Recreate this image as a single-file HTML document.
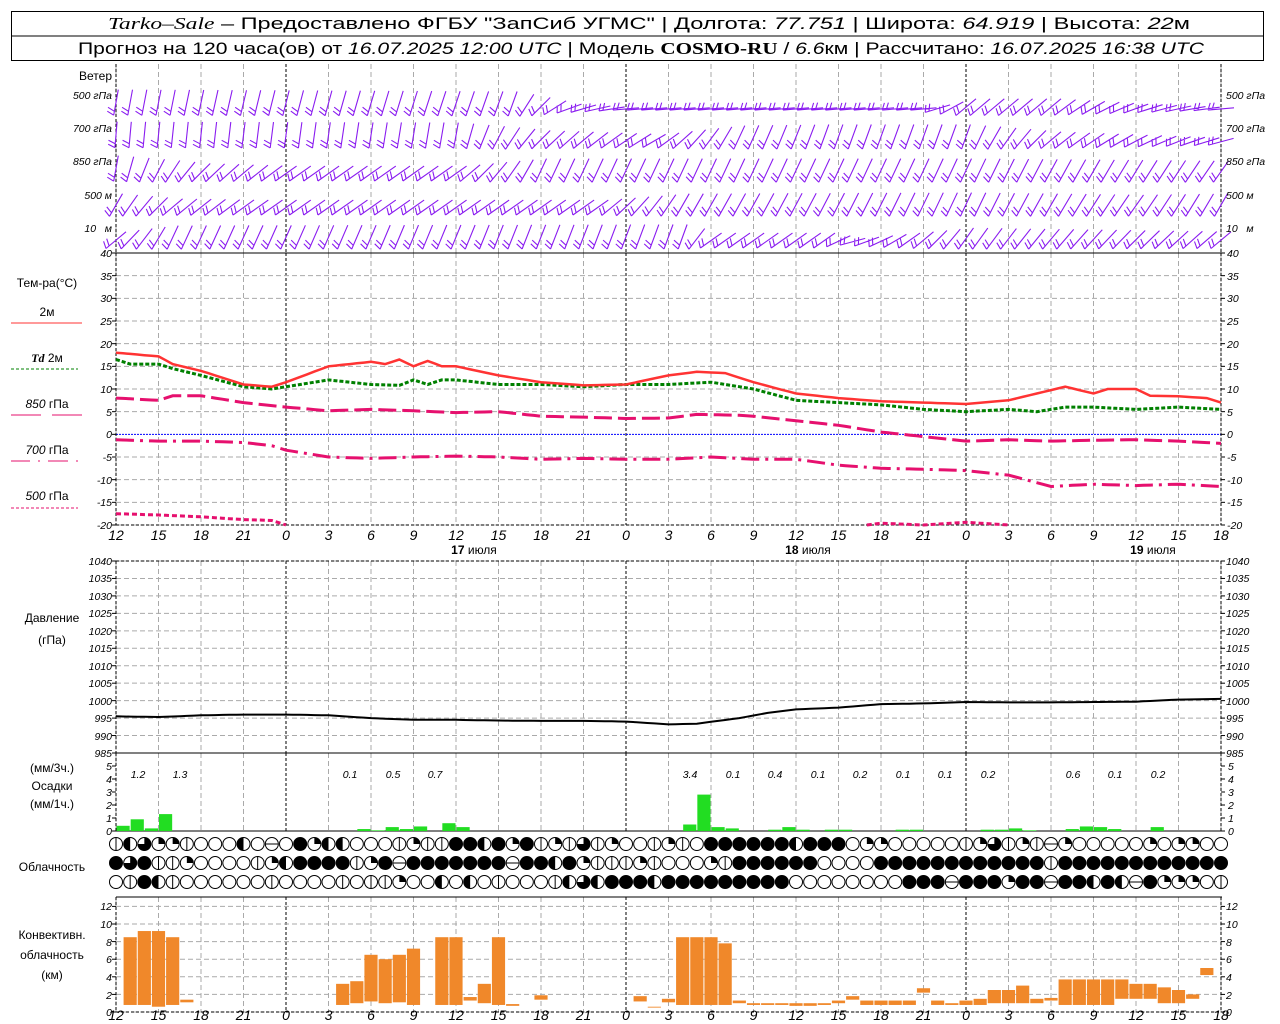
<!DOCTYPE html>
<html><head><meta charset="utf-8"><style>
html,body{margin:0;padding:0;background:#fff;}
svg{display:block;font-family:"Liberation Sans",sans-serif;}
.t{font-size:12px;fill:#000;}
.n{font-size:10.5px;font-style:italic;fill:#000;}
.h{font-size:17px;fill:#000;}
.tk{font-size:14px;font-style:italic;fill:#000;}
</style></head><body>
<svg id="s" width="1280" height="1024" viewBox="0 0 1280 1024" xmlns="http://www.w3.org/2000/svg">
<rect x="0" y="0" width="1280" height="1024" fill="#fff"/>
<g id="grid"></g>
<g id="data"></g>
<!-- header -->
<rect x="11.5" y="11.5" width="1252" height="49" fill="none" stroke="#000"/>
<line x1="11" y1="36" x2="1264" y2="36" stroke="#000"/>
<text class="h" x="108" y="29" textLength="1082" lengthAdjust="spacingAndGlyphs"><tspan font-family="Liberation Serif" font-style="italic">Tarko–Sale</tspan> – Предоставлено ФГБУ "ЗапСиб УГМС" | Долгота: <tspan font-style="italic">77.751</tspan> | Широта: <tspan font-style="italic">64.919</tspan> | Высота: <tspan font-style="italic">22</tspan>м</text>
<text class="h" x="78" y="54" font-size="16" textLength="1126" lengthAdjust="spacingAndGlyphs">Прогноз на 120 часа(ов) от <tspan font-style="italic">16.07.2025 12:00 UTC</tspan> | Модель <tspan font-family="Liberation Serif" font-weight="bold">COSMO-RU</tspan> / <tspan font-style="italic">6.6</tspan>км | Рассчитано: <tspan font-style="italic">16.07.2025 16:38 UTC</tspan></text>

<!-- wind labels -->
<text class="t" x="112" y="80" text-anchor="end">Ветер</text>
<g class="n" font-size="11">
<text x="112" y="99" text-anchor="end">500 гПа</text>
<text x="112" y="132" text-anchor="end">700 гПа</text>
<text x="112" y="165" text-anchor="end">850 гПа</text>
<text x="112" y="199" text-anchor="end">500 м</text>
<text x="112" y="232" text-anchor="end">10 &#160; м</text>
<text x="1226" y="99">500 гПа</text>
<text x="1226" y="132">700 гПа</text>
<text x="1226" y="165">850 гПа</text>
<text x="1226" y="199">500 м</text>
<text x="1226" y="232">10 &#160; м</text>
</g>

<!-- temperature legend -->
<text class="t" x="47" y="287" text-anchor="middle">Тем-ра(°С)</text>
<text class="t" x="47" y="316" text-anchor="middle" font-size="11">2м</text>
<line x1="11" y1="323" x2="82" y2="323" stroke="#ff3333"/>
<text class="t" x="47" y="362" text-anchor="middle" font-size="11"><tspan font-family="Liberation Serif" font-weight="bold" font-style="italic">Td</tspan>  2м</text>
<line x1="11" y1="369" x2="78" y2="369" stroke="#008000" stroke-dasharray="3,2"/>
<text class="t" x="47" y="408" text-anchor="middle" font-size="11"><tspan font-style="italic">850</tspan> гПа</text>
<path d="M11 415H41M52 415H82" stroke="#e6106e"/>
<text class="t" x="47" y="454" text-anchor="middle" font-size="11"><tspan font-style="italic">700</tspan> гПа</text>
<path d="M11 461H30M38 461H40M48 461H68M76 461H78" stroke="#e6106e"/>
<text class="t" x="47" y="500" text-anchor="middle" font-size="11"><tspan font-style="italic">500</tspan> гПа</text>
<line x1="11" y1="508" x2="78" y2="508" stroke="#e6106e" stroke-dasharray="3,2"/>

<g class="n">
<text x="112" y="257" text-anchor="end">40</text><text x="112" y="280" text-anchor="end">35</text><text x="112" y="302" text-anchor="end">30</text><text x="112" y="325" text-anchor="end">25</text><text x="112" y="348" text-anchor="end">20</text><text x="112" y="370" text-anchor="end">15</text><text x="112" y="393" text-anchor="end">10</text><text x="112" y="416" text-anchor="end">5</text><text x="112" y="438" text-anchor="end">0</text><text x="112" y="461" text-anchor="end">-5</text><text x="112" y="484" text-anchor="end">-10</text><text x="112" y="506" text-anchor="end">-15</text><text x="112" y="529" text-anchor="end">-20</text>
<text x="1227" y="257">40</text><text x="1227" y="280">35</text><text x="1227" y="302">30</text><text x="1227" y="325">25</text><text x="1227" y="348">20</text><text x="1227" y="370">15</text><text x="1227" y="393">10</text><text x="1227" y="416">5</text><text x="1227" y="438">0</text><text x="1227" y="461">-5</text><text x="1227" y="484">-10</text><text x="1227" y="506">-15</text><text x="1227" y="529">-20</text>
</g>
<g class="tk" text-anchor="middle">
<text x="116" y="540">12</text><text x="158.5" y="540">15</text><text x="201" y="540">18</text><text x="243.5" y="540">21</text><text x="286" y="540">0</text><text x="328.5" y="540">3</text><text x="371" y="540">6</text><text x="413.5" y="540">9</text><text x="456" y="540">12</text><text x="498.5" y="540">15</text><text x="541" y="540">18</text><text x="583.5" y="540">21</text><text x="626" y="540">0</text><text x="668.5" y="540">3</text><text x="711" y="540">6</text><text x="753.5" y="540">9</text><text x="796" y="540">12</text><text x="838.5" y="540">15</text><text x="881" y="540">18</text><text x="923.5" y="540">21</text><text x="966" y="540">0</text><text x="1008.5" y="540">3</text><text x="1051" y="540">6</text><text x="1093.5" y="540">9</text><text x="1136" y="540">12</text><text x="1178.5" y="540">15</text><text x="1221" y="540">18</text>
</g>
<g class="t" font-size="13" text-anchor="middle">
<text x="474" y="554"><tspan font-weight="bold">17</tspan> июля</text>
<text x="808" y="554"><tspan font-weight="bold">18</tspan> июля</text>
<text x="1153" y="554"><tspan font-weight="bold">19</tspan> июля</text>
</g>

<!-- pressure -->
<text class="t" x="52" y="622" text-anchor="middle">Давление</text>
<text class="t" x="52" y="644" text-anchor="middle">(гПа)</text>
<g class="n" font-size="9.5">
<text x="112" y="565" text-anchor="end">1040</text><text x="112" y="582" text-anchor="end">1035</text><text x="112" y="600" text-anchor="end">1030</text><text x="112" y="617" text-anchor="end">1025</text><text x="112" y="635" text-anchor="end">1020</text><text x="112" y="652" text-anchor="end">1015</text><text x="112" y="670" text-anchor="end">1010</text><text x="112" y="687" text-anchor="end">1005</text><text x="112" y="705" text-anchor="end">1000</text><text x="112" y="722" text-anchor="end">995</text><text x="112" y="740" text-anchor="end">990</text><text x="112" y="757" text-anchor="end">985</text>
<text x="1226" y="565">1040</text><text x="1226" y="582">1035</text><text x="1226" y="600">1030</text><text x="1226" y="617">1025</text><text x="1226" y="635">1020</text><text x="1226" y="652">1015</text><text x="1226" y="670">1010</text><text x="1226" y="687">1005</text><text x="1226" y="705">1000</text><text x="1226" y="722">995</text><text x="1226" y="740">990</text><text x="1226" y="757">985</text>
</g>

<!-- precip -->
<text class="t" x="52" y="772" text-anchor="middle">(мм/3ч.)</text>
<text class="t" x="52" y="790" text-anchor="middle">Осадки</text>
<text class="t" x="52" y="808" text-anchor="middle">(мм/1ч.)</text>
<g class="n" font-size="9.5">
<text x="112" y="770" text-anchor="end">5</text><text x="112" y="783" text-anchor="end">4</text><text x="112" y="796" text-anchor="end">3</text><text x="112" y="809" text-anchor="end">2</text><text x="112" y="822" text-anchor="end">1</text><text x="112" y="835" text-anchor="end">0</text>
<text x="1228" y="770">5</text><text x="1228" y="783">4</text><text x="1228" y="796">3</text><text x="1228" y="809">2</text><text x="1228" y="822">1</text><text x="1228" y="835">0</text>
</g>
<g class="n" font-size="13" text-anchor="middle">
<text x="138" y="778">1.2</text><text x="180" y="778">1.3</text><text x="350" y="778">0.1</text><text x="393" y="778">0.5</text><text x="435" y="778">0.7</text><text x="690" y="778">3.4</text><text x="733" y="778">0.1</text><text x="775" y="778">0.4</text><text x="818" y="778">0.1</text><text x="860" y="778">0.2</text><text x="903" y="778">0.1</text><text x="945" y="778">0.1</text><text x="988" y="778">0.2</text><text x="1073" y="778">0.6</text><text x="1115" y="778">0.1</text><text x="1158" y="778">0.2</text>
</g>

<text class="t" x="52" y="871" text-anchor="middle">Облачность</text>

<!-- convective -->
<text class="t" x="52" y="939" text-anchor="middle">Конвективн.</text>
<text class="t" x="52" y="959" text-anchor="middle">облачность</text>
<text class="t" x="52" y="979" text-anchor="middle">(км)</text>
<g class="n" font-size="9.5">
<text x="112" y="910" text-anchor="end">12</text><text x="112" y="928" text-anchor="end">10</text><text x="112" y="946" text-anchor="end">8</text><text x="112" y="963" text-anchor="end">6</text><text x="112" y="981" text-anchor="end">4</text><text x="112" y="999" text-anchor="end">2</text><text x="112" y="1016" text-anchor="end">0</text>
<text x="1226" y="910">12</text><text x="1226" y="928">10</text><text x="1226" y="946">8</text><text x="1226" y="963">6</text><text x="1226" y="981">4</text><text x="1226" y="999">2</text><text x="1226" y="1016">0</text>
</g>
<g class="tk" text-anchor="middle">
<text x="116" y="1020">12</text><text x="158.5" y="1020">15</text><text x="201" y="1020">18</text><text x="243.5" y="1020">21</text><text x="286" y="1020">0</text><text x="328.5" y="1020">3</text><text x="371" y="1020">6</text><text x="413.5" y="1020">9</text><text x="456" y="1020">12</text><text x="498.5" y="1020">15</text><text x="541" y="1020">18</text><text x="583.5" y="1020">21</text><text x="626" y="1020">0</text><text x="668.5" y="1020">3</text><text x="711" y="1020">6</text><text x="753.5" y="1020">9</text><text x="796" y="1020">12</text><text x="838.5" y="1020">15</text><text x="881" y="1020">18</text><text x="923.5" y="1020">21</text><text x="966" y="1020">0</text><text x="1008.5" y="1020">3</text><text x="1051" y="1020">6</text><text x="1093.5" y="1020">9</text><text x="1136" y="1020">12</text><text x="1178.5" y="1020">15</text><text x="1221" y="1020">18</text>
</g>
</svg>
<script>
(function(){
var NS="http://www.w3.org/2000/svg";
var G=document.getElementById("grid"),D=document.getElementById("data");
function el(p,tag,a){var e=document.createElementNS(NS,tag);for(var k in a)e.setAttribute(k,a[k]);p.appendChild(e);return e;}
var X0=116,PX=340/24;function X(t){return X0+t*PX;}
var XR=X(78);
var panels=[[64,253],[253,525],[561,753],[753,831],[897,1012]];
panels.forEach(function(p){
 for(var t=0;t<=78;t+=3){var zero=(t%24==12);
  el(G,"line",{x1:X(t),y1:p[0],x2:X(t),y2:p[1],stroke:zero?"#000":"#aaa","stroke-dasharray":zero?"3,2":"5,3","stroke-width":1});}
});
for(var v=-20;v<=40;v+=5){var y=253+(40-v)*272/60;el(G,"line",{x1:X0,y1:y,x2:XR,y2:y,stroke:v==0?"#0000ff":"#aaa","stroke-dasharray":v==0?"2,1":"5,3"});}
for(var p=985;p<=1040;p+=5){var y=561+(1040-p)*192/55;el(G,"line",{x1:X0,y1:y,x2:XR,y2:y,stroke:"#aaa","stroke-dasharray":"5,3"});}
for(var k=0;k<=12;k+=2){var y=1012-k*8.8;el(G,"line",{x1:X0,y1:y,x2:XR,y2:y,stroke:"#aaa","stroke-dasharray":"5,3"});}
[[X0,64,X0,253],[XR,64,XR,253],[X0,253,X0,525],[XR,253,XR,525],[X0,561,X0,753],[XR,561,XR,753],[X0,753,X0,831],[XR,753,XR,831],[X0,897,X0,1012],[XR,897,XR,1012]].forEach(function(a){el(G,"line",{x1:a[0],y1:a[1],x2:a[2],y2:a[3],stroke:"#000","stroke-dasharray":"3,2"});});
[[116,253,1222,253,""],[116,525,1222,525,"3,2"],[116,561,1222,561,"3,2"],[116,753,1222,753,""],[116,831,1222,831,""],[116,897,1222,897,""],[116,1012,1222,1012,"3,2"]].forEach(function(a){var o={x1:a[0],y1:a[1],x2:a[2],y2:a[3],stroke:"#000"};if(a[4])o["stroke-dasharray"]=a[4];el(G,"line",o);});
function ticks(ys){ys.forEach(function(y){el(G,"line",{x1:X0-4,y1:y,x2:X0,y2:y,stroke:"#000"});el(G,"line",{x1:XR,y1:y,x2:XR+4,y2:y,stroke:"#000"});});}
var ty=[];for(var v=-20;v<=40;v+=5)ty.push(253+(40-v)*272/60);ticks(ty);
ty=[];for(var p=985;p<=1040;p+=5)ty.push(561+(1040-p)*192/55);ticks(ty);
ty=[];for(var m=0;m<=5;m++)ty.push(831-m*13);ticks(ty);
ty=[];for(var k=0;k<=12;k+=2)ty.push(1012-k*8.8);ticks(ty);

function interp(kp,t){for(var i=0;i<kp.length-1;i++){if(t>=kp[i][0]&&t<=kp[i+1][0]){var f=(t-kp[i][0])/(kp[i+1][0]-kp[i][0]);return kp[i][1]+f*(kp[i+1][1]-kp[i][1]);}}return kp[kp.length-1][1];}
function TY(v){return 253+(40-v)*272/60;}
function curve(kp,style,t0,t1){var pts=[];for(var t=(t0||0);t<=(t1==null?78:t1)+1e-6;t+=0.5){pts.push(X(t).toFixed(1)+","+TY(interp(kp,t)).toFixed(1));}
 var o={points:pts.join(" "),fill:"none"};for(var k in style)o[k]=style[k];el(D,"polyline",o);}
var T2=[[0,18],[3,17.2],[4,15.5],[6,14],[9,11],[11,10.5],[12,11.5],[15,15],[18,16],[19,15.5],[20,16.5],[21,15],[22,16.2],[23,15],[24,15],[27,13],[30,11.5],[33,10.8],[36,11],[39,13],[41,13.8],[43,13.5],[45,11.5],[48,9],[51,8],[54,7.3],[57,7],[60,6.7],[63,7.5],[65,9],[67,10.5],[69,9],[70,10],[72,10],[73,8.5],[75,8.4],[77,8],[78,7]];
var TD=[[0,16.5],[1,15.5],[3,15.5],[4,14.5],[6,13],[9,10.5],[11,10],[12,10.5],[15,12],[18,11],[20,10.8],[21,12],[22,11],[23,12],[24,12],[27,11],[30,11],[33,10.5],[36,11],[39,11],[42,11.5],[45,10],[48,7.5],[51,7],[54,6.5],[57,5.5],[60,5],[63,5.5],[65,5],[67,6],[69,6],[72,5.5],[75,6],[78,5.5]];
var T850=[[0,8],[3,7.5],[4,8.5],[6,8.5],[9,7],[12,6],[15,5.2],[18,5.5],[21,5.2],[24,4.8],[27,5],[30,4],[33,3.8],[36,3.5],[39,3.6],[41,4.4],[44,4.2],[45,4],[48,3],[51,2],[54,0.5],[57,-0.5],[60,-1.5],[63,-1.2],[66,-1.5],[69,-1.3],[72,-1.2],[75,-1.5],[78,-2]];
var T700=[[0,-1.2],[3,-1.5],[6,-1.5],[9,-1.8],[11,-2.5],[12,-3.5],[15,-5],[18,-5.3],[21,-5],[24,-4.8],[27,-5],[30,-5.5],[33,-5.3],[36,-5.5],[39,-5.5],[42,-5],[45,-5.5],[48,-5.5],[51,-6.8],[54,-7.5],[57,-7.7],[60,-8],[63,-9],[66,-11.5],[69,-11],[72,-11.3],[75,-11],[78,-11.5]];
var T500=[[0,-17.5],[3,-17.8],[6,-18.2],[9,-18.8],[11,-19],[12,-20],[53,-20],[54,-19.6],[57,-20],[60,-19.4],[62,-19.8],[63,-20]];
curve(T850,{stroke:"#e6106e","stroke-width":3,"stroke-dasharray":"18,6"});
curve(T700,{stroke:"#e6106e","stroke-width":3,"stroke-dasharray":"18,6,3,6"});
curve(T500,{stroke:"#e6106e","stroke-width":3,"stroke-dasharray":"5,3"},0,12);
curve(T500,{stroke:"#e6106e","stroke-width":3,"stroke-dasharray":"5,3"},53,63);
curve(TD,{stroke:"#008000","stroke-width":3,"stroke-dasharray":"4,2"});
curve(T2,{stroke:"#ff3333","stroke-width":2.5});
var PR=[[0,995.5],[3,995.3],[6,995.8],[9,996],[12,996],[15,995.8],[18,995],[21,994.5],[24,994.5],[27,994.3],[30,994.2],[33,994.2],[36,994],[39,993.2],[41,993.4],[44,995],[46,996.5],[48,997.5],[51,998],[54,999],[57,999.2],[60,999.6],[63,999.5],[66,999.5],[69,999.6],[72,999.7],[75,1000.3],[78,1000.5]];
var pts=[];for(var t=0;t<=78;t+=0.5)pts.push(X(t).toFixed(1)+","+(561+(1040-interp(PR,t))*192/55).toFixed(1));
el(D,"polyline",{points:pts.join(" "),fill:"none",stroke:"#000","stroke-width":2});
var PC={0:0.4,1:0.9,2:0.2,3:1.3,17:0.15,18:0.05,19:0.3,20:0.15,21:0.35,23:0.6,24:0.3,40:0.5,41:2.8,42:0.3,43:0.2,46:0.1,47:0.3,48:0.1,50:0.1,51:0.1,55:0.1,56:0.1,61:0.1,62:0.1,63:0.2,64:0.05,67:0.15,68:0.35,69:0.3,70:0.15,73:0.3};
for(var k in PC){var t=+k,h=PC[k]*13;el(D,"rect",{x:X(t)+0.5,y:831-h,width:PX-1,height:h,fill:"#22dd22"});}
var CV={1:[0.8,8.5],2:[0.8,9.2],3:[0.6,9.2],4:[0.8,8.5],5:[1.1,1.4],16:[0.8,3.2],17:[1,3.5],18:[1.2,6.5],19:[1,6],20:[1.1,6.5],21:[0.8,7.2],23:[0.8,8.5],24:[0.8,8.5],25:[1.3,1.7],26:[1,3.2],27:[0.8,8.5],28:[0.7,0.9],30:[1.4,1.9],37:[1.2,1.8],38:[0.5,0.6],39:[1.1,1.5],40:[0.8,8.5],41:[0.8,8.5],42:[0.8,8.5],43:[0.8,7.8],44:[1,1.3],45:[0.8,1],46:[0.8,1],47:[0.8,1],48:[0.7,1],49:[0.7,1],50:[0.8,1],51:[1,1.3],52:[1.4,1.8],53:[0.8,1.3],54:[0.8,1.3],55:[0.8,1.3],56:[0.8,1.3],57:[2.2,2.7],58:[0.8,1.3],59:[0.8,1],60:[0.8,1.3],61:[0.8,1.5],62:[1,2.5],63:[1,2.5],64:[1,3],65:[1,1.5],66:[1.3,1.6],67:[0.8,3.7],68:[0.8,3.7],69:[0.8,3.7],70:[0.8,3.7],71:[1.5,3.7],72:[1.5,3.2],73:[1.5,3.2],74:[1,2.8],75:[1,2.5],76:[1.5,2],77:[4.2,5]};
for(var k in CV){var t=+k,a=CV[k];el(D,"rect",{x:X(t-0.5)+0.5,y:1012-a[1]*8.8,width:PX-1,height:(a[1]-a[0])*8.8,fill:"#f0882a"});}
var rows=[
"12355100020604522000151144245415131500"+"151044444424440550"+"00001531516500000505500",
"43411500001524444154644444446442451115"+"100051444444000044"+"44444444441444444444444",
"01421000000100001011500202010001232444"+"244444444400000000"+"44464445446442426455501"];
var cys=[844,863,882],r=6.5;
rows.forEach(function(s,ri){for(var i=0;i<79;i++){var c=s.charAt(i)||"0",cx=X(i),cy=cys[ri];
 el(D,"circle",{cx:cx,cy:cy,r:r,fill:c=="4"?"#000":"#fff",stroke:"#000","stroke-width":1});
 if(c=="1")el(D,"line",{x1:cx,y1:cy-r,x2:cx,y2:cy+r,stroke:"#000"});
 if(c=="6")el(D,"line",{x1:cx-r,y1:cy,x2:cx+r,y2:cy,stroke:"#000"});
 if(c=="2")el(D,"path",{d:"M"+cx+" "+(cy-r)+"A"+r+" "+r+" 0 0 0 "+cx+" "+(cy+r)+"Z",fill:"#000"});
 if(c=="5")el(D,"path",{d:"M"+cx+" "+cy+"L"+cx+" "+(cy-r)+"A"+r+" "+r+" 0 0 1 "+(cx+r)+" "+cy+"Z",fill:"#000"});
 if(c=="3")el(D,"path",{d:"M"+cx+" "+cy+"L"+cx+" "+(cy-r)+"A"+r+" "+r+" 0 1 1 "+(cx-r)+" "+cy+"Z",fill:"#000"});
}});
var WK=[
[[0,190],[28,200],[32,250],[36,265],[57,265],[60,230],[66,230],[72,250],[78,265]],
[[0,185],[24,190],[30,225],[38,240],[44,205],[50,200],[60,200],[66,230],[78,255]],
[[0,190],[6,225],[12,235],[24,235],[30,205],[50,205],[60,205],[78,215]],
[[0,210],[4,230],[10,235],[34,235],[40,210],[60,205],[72,215],[78,210]],
[[0,230],[4,205],[40,200],[42,235],[50,235],[52,255],[60,215],[78,230]]];
var tops=[86,119,152,186,219];
var wp="";
for(var ri=0;ri<5;ri++)for(var t=0;t<=78;t++){
 var a=interp(WK[ri],t)*Math.PI/180,dx=Math.sin(a),dy=-Math.cos(a);
 var mx=X(t),my=tops[ri]+15+8*Math.abs(dx);
 var sx=mx-dx*13,sy=my-dy*13,ex=mx+dx*13,ey=my+dy*13;
 var bx=-dy-0.4*dx,by=dx-0.4*dy;
 wp+="M"+sx.toFixed(1)+" "+sy.toFixed(1)+"L"+ex.toFixed(1)+" "+ey.toFixed(1);
 for(var b=0;b<2;b++){var px=ex-dx*4*b,py=ey-dy*4*b;wp+="M"+px.toFixed(1)+" "+py.toFixed(1)+"l"+(bx*7).toFixed(1)+" "+(by*7).toFixed(1);}
}
el(D,"path",{d:wp,fill:"none",stroke:"#8a1cf0","stroke-width":1.1});
})();
</script>
</body></html>
